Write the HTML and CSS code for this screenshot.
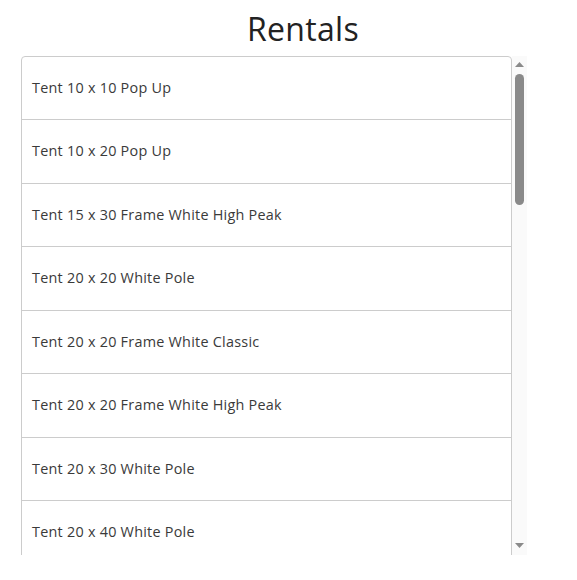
FILE: index.html
```html
<!DOCTYPE html>
<html>
<head>
<meta charset="utf-8">
<link rel="stylesheet" href="styles.css">
</head>
<body>
<div class="page">
  <h1 class="title">Rentals</h1>
  <div class="listbox">
    <div class="viewport">
      <ul class="list">
        <li class="item">Tent 10 x 10 Pop Up</li>
        <li class="item">Tent 10 x 20 Pop Up</li>
        <li class="item">Tent 15 x 30 Frame White High Peak</li>
        <li class="item">Tent 20 x 20 White Pole</li>
        <li class="item">Tent 20 x 20 Frame White Classic</li>
        <li class="item">Tent 20 x 20 Frame White High Peak</li>
        <li class="item">Tent 20 x 30 White Pole</li>
        <li class="item">Tent 20 x 40 White Pole</li>
      </ul>
    </div>
    <div class="scrollbar">
      <div class="sb-button">
        <svg width="15" height="15" viewBox="0 0 15 15"><polygon points="3,11 12,11 7.5,6" fill="#8a8a8a"/></svg>
      </div>
      <div class="sb-track">
        <div class="sb-thumb"></div>
      </div>
      <div class="sb-button">
        <svg width="15" height="15" viewBox="0 0 15 15"><polygon points="3,3 12,3 7.5,8" fill="#8a8a8a"/></svg>
      </div>
    </div>
  </div>
</div>
</body>
</html>
```

FILE: styles.css
```css
html, body {
  margin: 0;
  padding: 0;
  background: #ffffff;
}

.page {
  padding: 0 50px 0 21px;
  font-family: "Open Sans", "Liberation Sans", sans-serif;
  color: #3a3a3a;
}

.title {
  margin: 0;
  padding: 11px 0 9px 58px;
  height: 36px;
  font-size: 32px;
  line-height: 36px;
  font-weight: 400;
  letter-spacing: 0.3px;
  text-align: center;
  color: #222222;
}

.listbox {
  display: flex;
  width: 506px;
  height: 499px;
}

.viewport {
  width: 491px;
  height: 100%;
  overflow: hidden;
}

.scrollbar {
  width: 15px;
  height: 100%;
  display: flex;
  flex-direction: column;
  background: #fafafa;
}

.sb-button {
  height: 15px;
  flex: 0 0 15px;
}

.sb-button svg {
  display: block;
}

.sb-track {
  flex: 1 1 auto;
  padding: 3px 3px 0 3px;
}

.sb-thumb {
  height: 131px;
  background: #8a8a8a;
  border-radius: 5px;
}

.list {
  list-style: none;
  margin: 0;
  padding: 0;
  border: 1px solid #cccccc;
  border-radius: 4px;
}

.item {
  padding: 21.25px 10px;
  font-size: 14.4px;
  line-height: 20px;
  letter-spacing: 0.25px;
  border-bottom: 1px solid #cccccc;
}

.item:first-child {
  padding-top: 20.75px;
}
```
